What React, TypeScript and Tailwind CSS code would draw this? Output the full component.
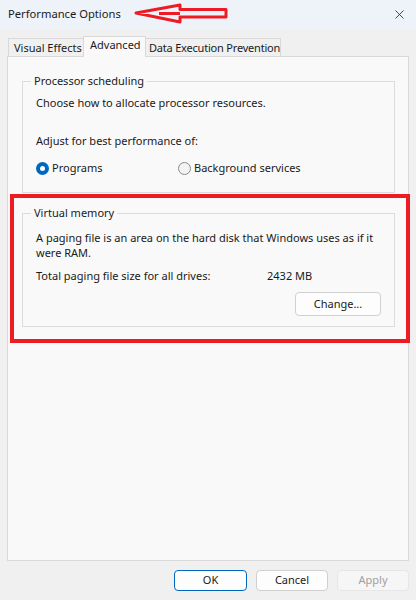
import { X } from "lucide-react";

const font = { fontFamily: '"Segoe UI", "Noto Sans", sans-serif' };

const Radio = ({ checked, label }: { checked?: boolean; label: string }) => (
  <label className="flex items-center gap-[3px]">
    {checked ? (
      <span className="w-[13px] h-[13px] rounded-full bg-[#0067c0] flex items-center justify-center">
        <span className="w-[5px] h-[5px] rounded-full bg-white" />
      </span>
    ) : (
      <span className="w-[13px] h-[13px] rounded-full border border-[#8a8a8a] bg-[#f3f3f3]" />
    )}
    <span>{label}</span>
  </label>
);

const Group = ({ title, children, className = "" }: { title: string; children: React.ReactNode; className?: string }) => (
  <fieldset className={"border border-[#dcdcdc] px-[13px] " + className}>
    <legend className="ml-[-5px] px-[3px] leading-[16px]">{title}</legend>
    {children}
  </fieldset>
);

export default function App() {
  return (
    <div className="w-[416px] h-[600px] bg-[#f0f0f0] flex flex-col text-[11px] text-[#1a1a1a]" style={font}>
      {/* title bar */}
      <div className="h-[30px] shrink-0 bg-[#eef2f9] flex items-center pl-[8px] pr-[7px]">
        <span className="leading-[16px] mt-[-2px] text-[11.2px]">Performance Options</span>
        <svg width="100" height="22" viewBox="0 0 100 22" className="ml-[12px] mt-[-2px]">
          <path
            d="M3 10 L47 2 L47 6.5 L93 6.5 L93 14 L47 14 L47 19 Z M26 10.5 L47 10.5"
            fill="none"
            stroke="#ed1c24"
            strokeWidth="3"
            strokeLinejoin="round"
          />
        </svg>
        <X className="ml-auto mr-[2px] mt-[-2px] w-[15px] h-[15px] text-[#222]" strokeWidth={1.3} />
      </div>

      {/* tabs */}
      <div className="flex items-end pl-[8px] h-[26px] shrink-0 relative z-10 whitespace-nowrap">
        <div className="w-[75px] h-[18px] pl-[5px] border border-r-0 border-b-0 border-[#d9d9d9] bg-[#f0f0f0] leading-[17px]">Visual Effects</div>
        <div className="w-[63px] h-[21px] pl-[6px] border border-b-0 border-[#d9d9d9] bg-[#f9f9f9] leading-[15px] mb-[-1px] pb-[4px]">Advanced</div>
        <div className="w-[135px] h-[18px] pl-[3px] border border-l-0 border-b-0 border-[#d9d9d9] bg-[#f0f0f0] leading-[17px] tracking-[-0.2px]">Data Execution Prevention</div>
      </div>

      {/* panel */}
      <div className="mx-[7px] h-[505px] shrink-0 border border-[#d9d9d9] bg-[#f9f9f9] pt-[16px]">
        <Group title="Processor scheduling" className="ml-[14px] mr-[13px] h-[120px]">
          <div className="leading-[16px] mt-[6px]">Choose how to allocate processor resources.</div>
          <div className="leading-[16px] mt-[22px]">Adjust for best performance of:</div>
          <div className="flex leading-[16px] mt-[11px]">
            <div className="w-[142px]">
              <Radio checked label="Programs" />
            </div>
            <Radio label="Background services" />
          </div>
        </Group>

        <div className="mt-[1px] ml-[2px] mr-[-2px] h-[149px] border-4 border-[#ed1c24] pl-[8px] pr-[11px] pt-[7px]">
          <Group title="Virtual memory" className="h-[122px]">
            <div className="leading-[15px] mt-[9px]">
              A paging file is an area on the hard disk that Windows uses as if it were RAM.
            </div>
            <div className="flex leading-[16px] mt-[8px]">
              <span className="w-[231px]">Total paging file size for all drives:</span>
              <span>2432 MB</span>
            </div>
            <div className="flex justify-end mt-[8px]">
              <button className="w-[86px] h-[24px] rounded-[4px] border border-[#d0d0d0] bg-[#fdfdfd]">Change...</button>
            </div>
          </Group>
        </div>
      </div>

      {/* footer */}
      <div className="flex justify-end gap-[9px] pr-[7px] pt-[9px]">
        <button className="w-[73px] h-[21px] rounded-[4px] border border-[#0067c0] bg-[#fdfdfd]">OK</button>
        <button className="w-[72px] h-[21px] rounded-[4px] border border-[#d0d0d0] bg-[#fdfdfd]">Cancel</button>
        <button className="w-[72px] h-[21px] rounded-[4px] border border-[#e6e6e6] bg-[#f6f6f6] text-[#a0a0a0]">Apply</button>
      </div>
    </div>
  );
}
